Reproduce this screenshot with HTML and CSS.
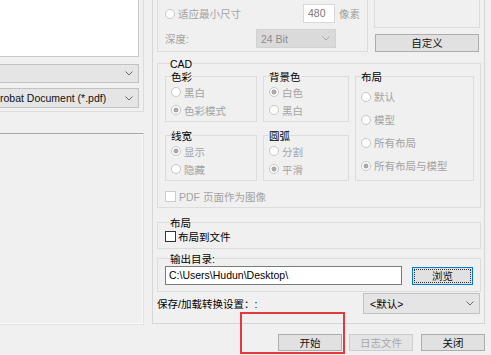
FILE: index.html
```html
<!DOCTYPE html>
<html lang="zh-CN">

<head>
    <meta charset="UTF-8">
    <title>CAD 转换设置</title>
    <link rel="stylesheet" href="styles.css">
</head>

<body>

    <div class="dialog">
        <div class="main">
            <div class="left">
                <div class="pane pane-files">
                    <div class="file-list"></div>
                    <div class="combo combo-wide first"><span></span><svg class="caret" width="8" height="5" viewBox="0 0 8 5"><polyline points="0.5,0.5 4,4 7.5,0.5" /></svg></div>
                    <div class="combo combo-wide second"><span>robat Document (*.pdf)</span><svg class="caret" width="8" height="5" viewBox="0 0 8 5"><polyline points="0.5,0.5 4,4 7.5,0.5" /></svg></div>
                </div>
                <div class="pane pane-empty"></div>
            </div>

            <div class="right">
                <div class="top-row">
                    <div class="size-group">
                        <div class="size-row">
                            <label class="radio enabled fit"><span class="dot"></span>适应最小尺寸</label>
                            <span class="num">480</span>
                            <span class="unit">像素</span>
                        </div>
                        <div class="size-row depth">
                            <span class="muted depth-label">深度:</span>
                            <span class="combo combo-disabled">24 Bit<svg class="caret" width="8" height="5" viewBox="0 0 8 5"><polyline points="0.5,0.5 4,4 7.5,0.5" /></svg></span>
                        </div>
                    </div>
                    <div class="preset">
                        <div class="preview"></div>
                        <button class="btn btn-custom">自定义</button>
                    </div>
                </div>

                <div class="group cad">
                    <div class="title">CAD</div>
                    <div class="cad-grid">
                        <div class="group sub">
                            <div class="title">色彩</div>
                            <label class="radio"><span class="dot"></span>黑白</label>
                            <label class="radio"><span class="dot on"></span>色彩模式</label>
                        </div>
                        <div class="group sub">
                            <div class="title">背景色</div>
                            <label class="radio"><span class="dot on"></span>白色</label>
                            <label class="radio"><span class="dot"></span>黑白</label>
                        </div>
                        <div class="group sub layout">
                            <div class="title">布局</div>
                            <div class="layout-list">
                                <label class="radio"><span class="dot"></span>默认</label>
                                <label class="radio"><span class="dot"></span>模型</label>
                                <label class="radio"><span class="dot"></span>所有布局</label>
                                <label class="radio"><span class="dot on"></span>所有布局与模型</label>
                            </div>
                        </div>
                        <div class="group sub">
                            <div class="title">线宽</div>
                            <label class="radio"><span class="dot on"></span>显示</label>
                            <label class="radio"><span class="dot"></span>隐藏</label>
                        </div>
                        <div class="group sub">
                            <div class="title">圆弧</div>
                            <label class="radio"><span class="dot"></span>分割</label>
                            <label class="radio"><span class="dot on"></span>平滑</label>
                        </div>
                    </div>
                    <label class="check muted pdf"><span class="box"></span>PDF 页面作为图像</label>
                </div>

                <div class="group layout-file">
                    <div class="title">布局</div>
                    <label class="check"><span class="box dark"></span>布局到文件</label>
                </div>

                <div class="group output">
                    <div class="title">输出目录:</div>
                    <div class="output-row">
                        <div class="path">C:\Users\Hudun\Desktop\</div>
                        <button class="btn btn-focus"><span>浏览</span></button>
                    </div>
                </div>

                <div class="save-row">
                    <span>保存/加载转换设置：:</span>
                    <div class="combo combo-save"><span>&lt;默认&gt;</span><svg class="caret" width="8" height="5" viewBox="0 0 8 5"><polyline points="0.5,0.5 4,4 7.5,0.5" /></svg></div>
                </div>
            </div>
        </div>

        <div class="footer">
            <button class="btn btn-foot">开始</button>
            <button class="btn btn-foot" disabled>日志文件</button>
            <button class="btn btn-foot">关闭</button>
        </div>

        <div class="highlight"></div>
    </div>

</body>

</html>
```

FILE: styles.css
```css
* {
    box-sizing: border-box;
}

body {
    margin: 0;
    background-color: #f0f0f0;
    font-family: 'Liberation Sans', 'Noto Sans CJK SC', sans-serif;
    font-size: 10.5px;
    color: #111;
    overflow: hidden;
}

.dialog {
    position: relative;
    width: 491px;
    height: 355px;
}

.main {
    display: flex;
    height: 325px;
}

/* left column */
.left {
    width: 144px;
}

.pane-files {
    height: 112px;
    border-right: 1px solid #dcdcdc;
    border-bottom: 1px solid #dcdcdc;
}

.file-list {
    width: 139px;
    height: 57px;
    background-color: #fff;
    border-right: 1px solid #c9c9c9;
    border-bottom: 1px solid #c9c9c9;
}

.combo {
    display: flex;
    align-items: center;
    justify-content: space-between;
    background-color: #e5e5e5;
    border: 1px solid #c2c2c2;
    padding: 0 5px 0 4px;
    line-height: 14px;
}

.caret polyline {
    fill: none;
    stroke: #6a6a6a;
    stroke-width: 1;
}

.combo-wide {
    width: 139px;
    border-left: none;
    padding-left: 0;
}

.combo-wide.first {
    margin-top: 7px;
    height: 19px;
}

.combo-wide.second {
    margin-top: 5px;
    height: 20px;
}

.pane-empty {
    margin-top: 21px;
    height: 192px;
    border-top: 1px solid #a9a9a9;
    border-right: 1px solid #e2e2e2;
    border-bottom: 1px solid #e2e2e2;
    box-shadow: inset -1px -1px 0 #fafafa;
}

/* right column */
.right {
    margin-left: 8px;
    width: 333px;
    height: 324px;
    border-left: 1px solid #d6d6d6;
    border-right: 1px solid #d6d6d6;
    border-bottom: 1px solid #d6d6d6;
    padding: 0 3px 0 4px;
}

.top-row {
    display: flex;
    height: 52px;
}

.size-group {
    width: 211px;
    height: 52px;
    border: 1px solid #dcdcdc;
    border-top: none;
    padding-left: 7px;
}

.size-row {
    display: flex;
    align-items: center;
    height: 19px;
    margin-top: 4px;
}

.size-row.depth {
    margin-top: 6px;
}

.fit {
    width: 138px;
    color: #4a4a4a;
}

.num {
    width: 32px;
    height: 19px;
    line-height: 17px;
    padding-left: 4px;
    background-color: #fff;
    border: 1px solid #d9d9d9;
    color: #777;
}

.unit {
    margin-left: 4px;
    color: #a0a0a0;
}

.muted {
    color: #a3a3a3;
}

.depth-label {
    width: 91px;
}

.combo-disabled {
    width: 80px;
    height: 19px;
    background-color: #dadada;
    border-color: #d2d2d2;
    color: #8d8d8d;
}

.combo-disabled .caret polyline {
    stroke: #a8a8a8;
}

.preset {
    width: 106px;
    margin-left: 6px;
}

.preview {
    height: 28px;
    border: 1px solid #dcdcdc;
    border-top: none;
}

.btn {
    font-family: inherit;
    font-size: 10.5px;
    color: #111;
    background-color: #e1e1e1;
    border: 1px solid #adadad;
    padding: 0;
    line-height: 14px;
}

.btn-custom {
    display: block;
    width: 104px;
    height: 18px;
    margin: 6px 0 0 1px;
}

/* group boxes */
.group {
    border: 1px solid #dcdcdc;
}

.title {
    display: table;
    margin: -6px 0 0 5px;
    line-height: 12px;
    background-color: #f0f0f0;
    color: #000;
}

.cad {
    margin-top: 11px;
    padding: 0 0 4px 7px;
}

.cad-grid {
    display: grid;
    grid-template-columns: 92px 86px 119px;
    grid-template-rows: 46px 46px;
    column-gap: 6px;
    row-gap: 13px;
    margin-top: 6px;
}

.sub {
    padding-left: 5px;
}

.sub .title {
    margin-left: 0;
}

.layout {
    grid-column: 3;
    grid-row: 1 / 3;
}

.layout-list {
    margin-top: 2px;
}

.layout-list .radio {
    height: 23px;
}

.radio {
    display: flex;
    align-items: center;
    height: 18px;
    color: #a3a3a3;
}

.dot {
    width: 10px;
    height: 10px;
    margin-right: 3px;
    border: 1px solid #c7c7c7;
    border-radius: 50%;
    background-color: #fff;
}

.dot.on {
    background: radial-gradient(circle, #a9a9a9 0 2.2px, #fff 2.8px);
}

.check {
    display: flex;
    align-items: center;
}

.box {
    width: 11px;
    height: 11px;
    margin-right: 3px;
    background-color: #fff;
    border: 1px solid #cdcdcd;
}

.box.dark {
    border-color: #333;
    margin-right: 2px;
}

.pdf {
    height: 13px;
    margin-top: 9px;
}

.layout-file {
    margin-top: 14px;
    padding: 0 0 5px 7px;
}

.layout-file .check {
    height: 14px;
    color: #000;
}

.output {
    margin-top: 9px;
    padding: 0 0 6px 7px;
}

.output-row {
    display: flex;
    margin-top: 1px;
}

.path {
    width: 237px;
    height: 19px;
    line-height: 17px;
    padding-left: 3px;
    background-color: #fff;
    border: 1px solid #7a7a7a;
    color: #000;
}

.btn-focus {
    width: 61px;
    height: 18px;
    margin: 1px 0 0 10px;
    border: 1px solid #0078d7;
    padding: 1px;
}

.btn-focus span {
    display: block;
    height: 14px;
    line-height: 12px;
    border: 1px dotted #333;
}

.save-row {
    display: flex;
    align-items: center;
    margin-top: 1px;
    height: 21px;
    color: #000;
}

.combo-save {
    width: 117px;
    height: 21px;
    margin: 0 1px 0 auto;
    color: #000;
    padding-left: 6px;
}

/* bottom buttons */
.footer {
    display: flex;
    justify-content: flex-end;
    gap: 7px;
    padding: 9px 6px 0 0;
}

.btn-foot {
    width: 64px;
    height: 17px;
}

.btn-foot:disabled {
    color: #a8a8a8;
    background-color: #e4e4e4;
    border-color: #cdcdcd;
}

.footer .btn-foot:last-child {
    margin-left: 1px;
}

.highlight {
    position: absolute;
    left: 240px;
    top: 312px;
    width: 105px;
    height: 42px;
    border: 2px solid #e5383d;
}
```
